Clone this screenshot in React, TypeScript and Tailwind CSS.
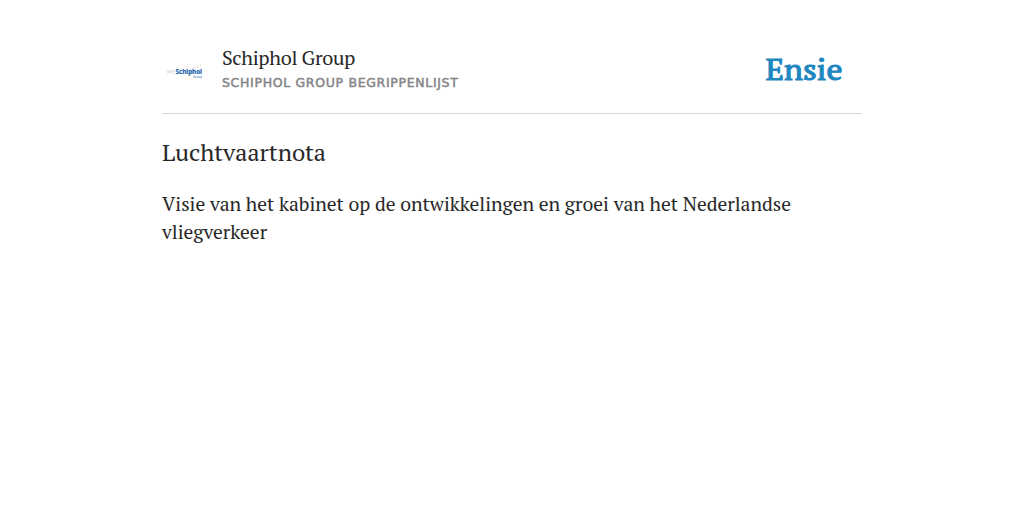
function SchipholLogo() {
  return (
    <svg className="h-[45px] w-[45px] shrink-0" viewBox="0 0 45 45">
      <path d="M5 21.5h8v1.3H5zM5 23.3h7v1H5z" fill="#dcdfe2" />
      <path d="M27 20l12-5v4h-1v-3l-2 1v3h-1v-2l-2 1v1z" fill="#eceef0" />
      <text
        x="13.5"
        y="25.3"
        textLength="26.5"
        lengthAdjust="spacingAndGlyphs"
        fontSize="7"
        fontWeight="700"
        fontFamily="'Open Sans', sans-serif"
        fill="#1460aa"
        stroke="#1460aa"
        strokeWidth="0.2"
      >
        Schiphol
      </text>
      <text
        x="31"
        y="28.6"
        textLength="9"
        lengthAdjust="spacingAndGlyphs"
        fontSize="3.3"
        fontWeight="700"
        fontFamily="'Open Sans', sans-serif"
        fill="#7d9fcc"
      >
        Group
      </text>
    </svg>
  );
}

function EnsieLogo() {
  return (
    <svg className="mr-[17px] h-[42px] w-[82px]" viewBox="0 0 82 42">
      <text
        x="2.5"
        y="31.3"
        textLength="77"
        lengthAdjust="spacingAndGlyphs"
        fontSize="30"
        fontFamily="'PT Serif', 'DejaVu Serif Condensed', 'DejaVu Serif', serif"
        fill="#1e87c0"
        stroke="#1e87c0"
        strokeWidth="1.1"
      >
        Ensie
      </text>
    </svg>
  );
}

export default function App() {
  return (
    <div className="min-h-screen bg-white font-['PT_Serif','Liberation_Serif',serif] text-[#282828]">
      <div className="mx-auto w-[700px] pt-[44px]">
        <header className="flex h-[70px] items-start justify-between border-b border-[#d8d8da]">
          <div className="flex gap-[15px]">
            <div className="pt-[5px]">
              <SchipholLogo />
            </div>
            <div>
              <div className="text-[20px] leading-7 tracking-[-0.36px]">Schiphol Group</div>
              <div className="font-['DejaVu_Sans',sans-serif] text-[12.5px] leading-[21px] tracking-[0.67px] text-[#858588] uppercase [-webkit-text-stroke:0.5px_#858588]">
                Schiphol Group begrippenlijst
              </div>
            </div>
          </div>
          <div className="pt-[5px]">
            <EnsieLogo />
          </div>
        </header>

        <h1 className="mt-[21px] text-[24px] leading-[34px]">Luchtvaartnota</h1>
        <p className="mt-[21px] text-[19.5px] leading-7 tracking-[-0.03px]">
          Visie van het kabinet op de ontwikkelingen en groei van het Nederlandse{" "}
          <br />
          vliegverkeer
        </p>
      </div>
    </div>
  );
}
